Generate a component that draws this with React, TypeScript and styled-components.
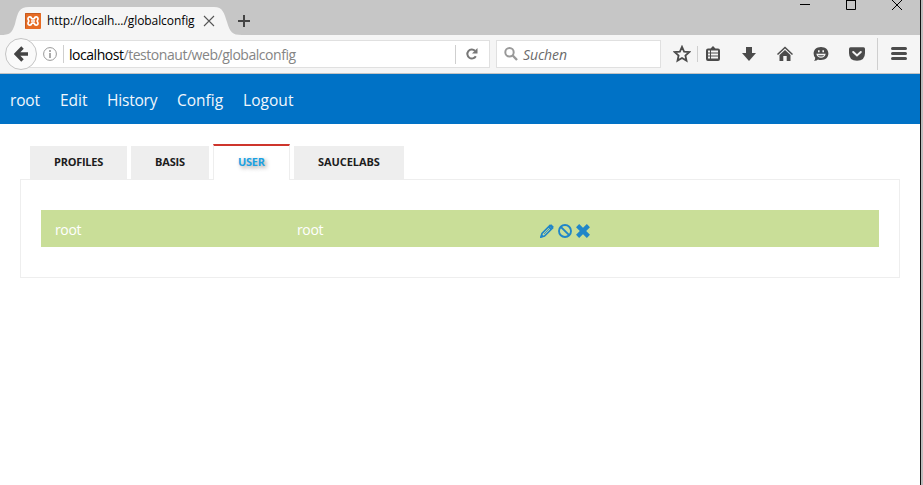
import React from "react";
import styled, { createGlobalStyle } from "styled-components";

const GlobalStyle = createGlobalStyle`
  * { box-sizing: border-box; }
  html, body { margin: 0; padding: 0; }
  body { background: #fff; overflow: hidden; font-family: "Open Sans", "Noto Sans", sans-serif; }
`;

const Desktop = styled.div`
  display: flex;
  width: 923px;
  height: 485px;
  background: #bdbdbd;
`;
const BrowserWindow = styled.div`
  display: flex;
  flex-direction: column;
  width: 921px;
  background: #fff;
  border-right: 1px solid #111;
`;
const TitleBar = styled.header`
  display: flex;
  align-items: flex-start;
  height: 35px;
  background: #c6c6c6;
`;
const BrowserTab = styled.div`
  position: relative;
  width: 242px;
  height: 28px;
  margin-top: 7px;
`;
const TabShape = styled.svg`
  position: absolute;
  inset: 0;
`;
const TabContent = styled.div`
  position: relative;
  display: flex;
  align-items: center;
  height: 28px;
  padding-left: 25px;
`;
const TabTitle = styled.span`
  width: 149px;
  margin: 0 7px 0 6px;
  font-size: 12px;
  letter-spacing: -0.08px;
  line-height: 16px;
  white-space: nowrap;
  color: #000;
`;
const NewTab = styled.svg`
  margin: 14px 0 0 -5px;
`;
const WindowControls = styled.div`
  display: flex;
  gap: 36px;
  margin: 0 18px 0 auto;
`;

const Toolbar = styled.div`
  display: flex;
  align-items: center;
  height: 39px;
  background: #f5f5f5;
  border-bottom: 1px solid #c3c3c3;
`;
const BackButton = styled.button`
  z-index: 1;
  display: flex;
  align-items: center;
  justify-content: center;
  width: 32px;
  height: 32px;
  margin: 0 0 0 5px;
  padding: 0;
  border: 1px solid #c4c4c4;
  border-radius: 50%;
  background: #fafafa;
`;
const AddressBar = styled.div`
  display: flex;
  align-items: center;
  width: 470px;
  height: 28px;
  margin-left: -17px;
  padding-left: 22px;
  background: #fff;
  border: 1px solid #e0e0e0;
`;
const Separator = styled.i<{ $height: number; $left?: number; $right?: number }>`
  width: 1px;
  height: ${(p) => p.$height}px;
  margin-left: ${(p) => p.$left ?? 0}px;
  margin-right: ${(p) => p.$right ?? 0}px;
  background: #cfcfcf;
`;
const Url = styled.span`
  flex: 1;
  padding-top: 2px;
  font-size: 14px;
  letter-spacing: -0.46px;
  line-height: 20px;
  white-space: nowrap;
  color: #858585;
`;
const Host = styled.span`
  color: #000;
`;
const Reload = styled.svg`
  margin: 0 11px 0 10px;
`;
const SearchBox = styled.div`
  display: flex;
  align-items: center;
  gap: 5px;
  width: 165px;
  height: 28px;
  margin-left: 6px;
  padding-left: 7px;
  background: #fff;
  border: 1px solid #e0e0e0;
`;
const Placeholder = styled.span`
  padding-top: 2px;
  font-size: 14px;
  font-style: italic;
  letter-spacing: -0.12px;
  line-height: 20px;
  color: #6b6b6b;
`;
const ToolIcon = styled.svg<{ $left: number }>`
  flex: none;
  width: 18px;
  height: 18px;
  margin-left: ${(p) => p.$left}px;
  color: #4b4b4b;
`;

const SiteNav = styled.nav`
  display: flex;
  align-items: center;
  height: 50px;
  padding: 2px 0 0 10px;
  background: #0072c6;
`;
const NavLink = styled.a<{ $width: number; $spacing: number }>`
  width: ${(p) => p.$width}px;
  margin-right: 20px;
  font-size: 15.5px;
  letter-spacing: ${(p) => p.$spacing}px;
  line-height: 22px;
  color: #f2f7fc;
`;
const Main = styled.main`
  padding: 20px 20px 0;
`;
const TabList = styled.div`
  display: flex;
  align-items: flex-end;
  gap: 4px;
  height: 36px;
  padding-left: 10px;
`;
const SectionTab = styled.div<{ $width: number; $spacing: number; $active?: boolean }>`
  z-index: ${(p) => (p.$active ? 1 : 0)};
  width: ${(p) => p.$width}px;
  height: ${(p) => (p.$active ? 36 : 33)}px;
  margin-bottom: ${(p) => (p.$active ? 0 : 1)}px;
  padding: 8px 0 0 24px;
  border: solid #eee;
  border-width: ${(p) => (p.$active ? "2px 1px 0" : "0")};
  border-top-color: ${(p) => (p.$active ? "#ce352c" : "#eee")};
  background: ${(p) => (p.$active ? "#fff" : "#eee")};
  color: ${(p) => (p.$active ? "#1ba1e2" : "#1d1d1d")};
  text-shadow: ${(p) => (p.$active ? "2px 2px 4px rgba(0,0,0,.4)" : "none")};
  font-size: 11px;
  font-weight: 700;
  letter-spacing: ${(p) => p.$spacing}px;
  line-height: 16px;
`;
const Panel = styled.section`
  height: 99px;
  margin-top: -1px;
  padding: 30px 20px;
  border: 1px solid #eee;
`;
const UserRow = styled.div`
  display: grid;
  grid-template-columns: 242px 243px 1fr;
  align-items: center;
  height: 37px;
  padding: 4px 14px 0;
  background: #c9de98;
  color: #fff;
  font-size: 14px;
  letter-spacing: -0.35px;
  line-height: 20px;
`;
const UserCell = styled.span`
  margin-top: -1px;
`;
const Actions = styled.div`
  display: flex;
  gap: 4px;
  color: #2086c8;
`;

const sections = [
  { label: "PROFILES", width: 97, spacing: -0.26 },
  { label: "BASIS", width: 78, spacing: -0.15 },
  { label: "USER", width: 77, spacing: -0.28, active: true },
  { label: "SAUCELABS", width: 110, spacing: -0.06 },
];

const links = [
  { label: "root", width: 30, spacing: -0.2 },
  { label: "Edit", width: 27, spacing: 0 },
  { label: "History", width: 50, spacing: -0.2 },
  { label: "Config", width: 46, spacing: 0 },
  { label: "Logout", width: 51, spacing: 0.05 },
];

export default function App() {
  return (
    <>
      <GlobalStyle />
      <Desktop>
        <BrowserWindow>
          <TitleBar>
            <BrowserTab>
              <TabShape width="242" height="28">
                <path d="M0 28C10 28 12 26 15 17C18 5 19 0 29 0H214C223 0 224 6 227 15C230 25 232 28 242 28Z" fill="#f5f5f5" />
              </TabShape>
              <TabContent>
                <svg width="16" height="16" viewBox="0 0 16 16">
                  <rect width="16" height="16" rx="1" fill="#e66b24" />
                  <path d="M.5 15.5V.5H15.5" fill="none" stroke="#c75b1f" />
                  <path d="M6 8H10M6.6 5.9C6.6 3.2 3 3.2 3 5.8C3 7 3.8 7.2 3.8 8S3 9 3 10.2C3 12.8 6.6 12.8 6.6 10.1M9.4 5.9C9.4 3.2 13 3.2 13 5.8C13 7 12.2 7.2 12.2 8S13 9 13 10.2C13 12.8 9.4 12.8 9.4 10.1M6.4 5.8H9.6M6.4 10.2H9.6" fill="none" stroke="#fff" strokeWidth="1.7" />
                </svg>
                <TabTitle>http://localh.../globalconfig</TabTitle>
                <svg width="12" height="12"><path d="M1 1L11 11M11 1L1 11" stroke="#555" strokeWidth="1.1" /></svg>
              </TabContent>
            </BrowserTab>
            <NewTab width="14" height="14"><path d="M7 1V13M1 7H13" stroke="#444" strokeWidth="2" /></NewTab>
            <WindowControls>
              <svg width="10" height="10"><path d="M0 4.5H10" stroke="#000" /></svg>
              <svg width="10" height="10"><path d="M.5 0V9.5H9.5V0M0 .5H10" fill="none" stroke="#000" /></svg>
              <svg width="10" height="10"><path d="M0 0L10 10M10 0L0 10" stroke="#000" /></svg>
            </WindowControls>
          </TitleBar>
          <Toolbar>
            <BackButton aria-label="Back">
              <svg width="14" height="16" viewBox="0 0 14 16"><path d="M8.5 1.5L2.2 8L8.5 14.5M2.5 8H14" fill="none" stroke="#444" strokeWidth="3.4" /></svg>
            </BackButton>
            <AddressBar>
              <svg width="14" height="14" fill="none" stroke="#999">
                <circle cx="7" cy="7" r="6.4" />
                <path d="M7 6V11M7 3V5" stroke="#888" strokeWidth="1.4" />
              </svg>
              <Separator $height={18} $left={6} $right={5} />
              <Url><Host>localhost</Host>/testonaut/web/globalconfig</Url>
              <Separator $height={19} />
              <Reload width="12" height="12" viewBox="0 0 12 12">
                <path d="M9.8 8.2A4.5 4.5 0 1 1 9 2.8" fill="none" stroke="#777" strokeWidth="2" />
                <path d="M11.5 0V5.5H6Z" fill="#777" />
              </Reload>
            </AddressBar>
            <SearchBox>
              <svg width="14" height="14" fill="none" stroke="#999">
                <circle cx="5.5" cy="5.3" r="4.2" strokeWidth="2" />
                <path d="M8.7 8.5L13 13" strokeWidth="2.4" />
              </svg>
              <Placeholder>Suchen</Placeholder>
            </SearchBox>
            <ToolIcon $left={12} viewBox="0 0 18 18">
              <path d="M9 1.8L11.1 6.6L16.2 7.1L12.4 10.5L13.5 15.6L9 13L4.5 15.6L5.6 10.5L1.8 7.1L6.9 6.6Z" fill="none" stroke="currentColor" strokeWidth="1.8" />
            </ToolIcon>
            <Separator $height={16} $left={6} />
            <ToolIcon $left={6} viewBox="0 0 18 18">
              <path d="M4 3.5H6.5L9 1L11.5 3.5H14Q16 3.5 16 5.5V14Q16 16 14 16H4Q2 16 2 14V5.5Q2 3.5 4 3.5Z" fill="currentColor" />
              <path d="M4 6.5H6M7 6.5H14M4 9.5H6M7 9.5H14M4 12.5H6M7 12.5H14" stroke="#f5f5f5" strokeWidth="1.8" />
            </ToolIcon>
            <ToolIcon $left={18} viewBox="0 0 18 18">
              <path d="M6 2H12V8H16L9 16L2 8H6Z" fill="currentColor" />
            </ToolIcon>
            <ToolIcon $left={18} viewBox="0 0 18 18">
              <path d="M1.5 9.5L9 2.5L16.5 9.5" fill="none" stroke="currentColor" strokeWidth="1.5" />
              <path d="M9 5L14.5 10V16H10.7V11H7.3V16H3.5V10Z" fill="currentColor" />
            </ToolIcon>
            <ToolIcon $left={18} viewBox="0 0 18 18">
              <path d="M9 2C13.5 2 16.4 4.8 16.4 8.5S13.5 15 9 15C7.5 15 6.8 14.8 6 14.4Q4.5 16 2 15.8Q3.3 14.5 3.2 12.7Q1.6 11 1.6 8.5C1.6 4.8 4.5 2 9 2Z" fill="currentColor" />
              <path d="M6 6.2H7.6M10.4 6.2H12" stroke="#f5f5f5" strokeWidth="2" />
              <path d="M4.3 8.8H13.7Q12.8 12.8 9 12.8T4.3 8.8Z" fill="#f5f5f5" />
              <path d="M5.8 10.2H12.2Q11.5 11.6 9 11.6T5.8 10.2Z" fill="#4b4b4b" />
            </ToolIcon>
            <ToolIcon $left={18} viewBox="0 0 18 18">
              <path d="M2.5 2.2H15.5Q17 2.2 17 3.7V8Q17 15.8 9 15.8T1 8V3.7Q1 2.2 2.5 2.2Z" fill="currentColor" />
              <path d="M5.2 7L9 10.5L12.8 7" fill="none" stroke="#f5f5f5" strokeWidth="2" strokeLinecap="round" />
            </ToolIcon>
            <Separator $height={32} $left={11} />
            <ToolIcon $left={12} viewBox="0 0 18 18">
              <path d="M2.5 3.5H15.5M2.5 8.5H15.5M2.5 13.5H15.5" stroke="currentColor" strokeWidth="3" strokeLinecap="round" />
            </ToolIcon>
          </Toolbar>
          <SiteNav>
            {links.map((l) => <NavLink key={l.label} $width={l.width} $spacing={l.spacing}>{l.label}</NavLink>)}
          </SiteNav>
          <Main>
            <TabList>
              {sections.map((s) => (
                <SectionTab key={s.label} $width={s.width} $spacing={s.spacing} $active={s.active}>{s.label}</SectionTab>
              ))}
            </TabList>
            <Panel>
              <UserRow>
                <UserCell>root</UserCell>
                <UserCell>root</UserCell>
                <Actions>
                  <svg width="14" height="14" viewBox="0 0 14 14">
                    <path d="M1 13L2 9.5L10 1.5L12.5 4L4.5 12Z M8.8 2.8L11.3 5.3" fill="none" stroke="currentColor" strokeWidth="1.7" />
                    <path d="M9.7 1.7L11.2.3L13.8 2.8L12.4 4.3Z M0 14L1.4 10L4 12.6Z" fill="currentColor" />
                    <path d="M4 10L9.7 4.3" stroke="currentColor" strokeWidth=".8" />
                  </svg>
                  <svg width="14" height="14" viewBox="0 0 14 14" fill="none" stroke="currentColor" strokeWidth="1.9">
                    <circle cx="7" cy="7" r="6" /><path d="M2.8 2.8L11.2 11.2" />
                  </svg>
                  <svg width="14" height="14" viewBox="0 0 14 14"><path d="M1.6 1.6L12.4 12.4M12.4 1.6L1.6 12.4" stroke="currentColor" strokeWidth="4.4" /></svg>
                </Actions>
              </UserRow>
            </Panel>
          </Main>
        </BrowserWindow>
      </Desktop>
    </>
  );
}
